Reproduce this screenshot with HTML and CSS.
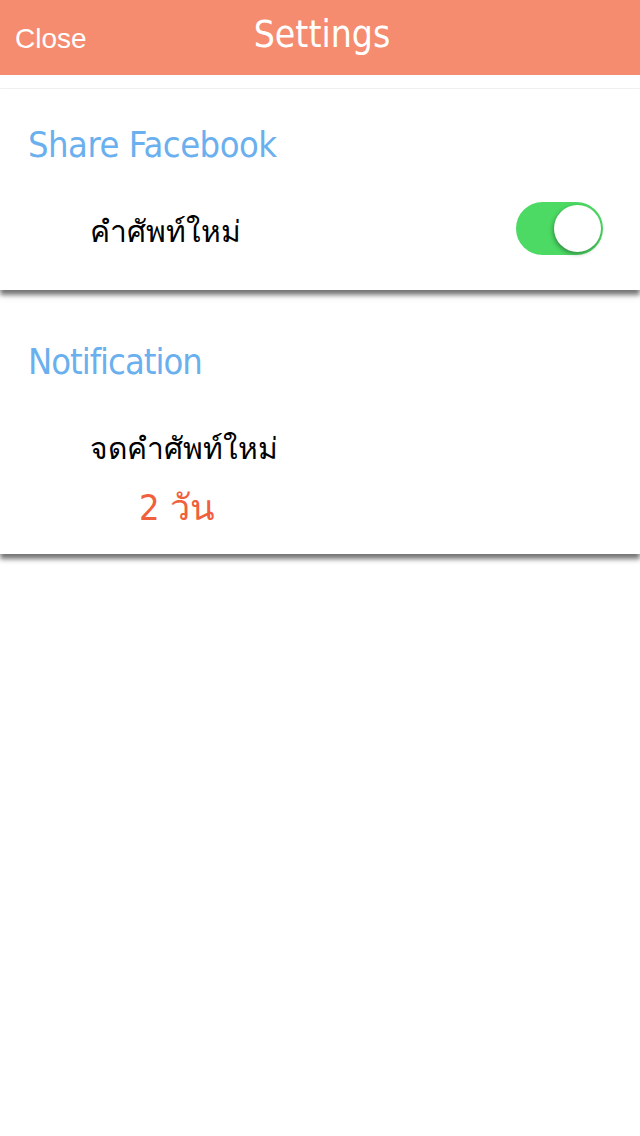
FILE: index.html
```html
<!DOCTYPE html>
<html lang="th">
<head>
  <meta charset="UTF-8" />
  <title>Settings</title>
  <meta name="viewport" content="width=device-width, initial-scale=1.0" />
  <link rel="stylesheet" href="styles.css">
</head>
<body>
  <header class="topbar">
    <span class="close-btn">Close</span>
    <h1 class="title">Settings</h1>
  </header>

  <div class="divider"></div>

  <section class="card card-share">
    <h2 class="card-title">Share Facebook</h2>
    <div class="row">
      <span class="row-label">คำศัพท์ใหม่</span>
      <div class="switch on"><div class="knob"></div></div>
    </div>
  </section>

  <section class="card card-notify">
    <h2 class="card-title">Notification</h2>
    <div class="row-label">จดคำศัพท์ใหม่</div>
    <div class="days">2 วัน</div>
  </section>
</body>
</html>
```

FILE: styles.css
```css
html, body {
  min-height: 100%;
}
body {
  margin: 0;
  min-height: 100vh;
  background: #fff;
  font-family: "DejaVu Sans Condensed", "DejaVu Sans", sans-serif;
}
.topbar {
  height: 75px;
  background: #f58c70;
  display: flex;
  align-items: center;
  justify-content: center;
  position: relative;
  color: #fff;
}
.close-btn {
  position: absolute;
  left: 15px;
  top: 23px;
  font-family: "Liberation Sans", sans-serif;
  font-size: 28px;
}
.title {
  margin: 0 0 6px 4px;
  font-weight: normal;
  font-size: 37px;
}
.divider {
  height: 13px;
  border-bottom: 1px solid #f2f2f2;
}
.card {
  background: #fff;
  box-shadow: 0 5px 5px rgba(0, 0, 0, 0.55);
  padding: 0 28px;
  position: relative;
}
.card-share {
  height: 201px;
  margin-bottom: 13px;
}
.card-notify {
  height: 251px;
}
.card-title {
  margin: 0;
  font-weight: normal;
  font-size: 36px;
  letter-spacing: -0.5px;
  color: #6ab0ee;
}
.card-share .card-title {
  padding-top: 35px;
}
.card-notify .card-title {
  padding-top: 38px;
  letter-spacing: -1px;
}
.row {
  display: flex;
  align-items: center;
  justify-content: space-between;
  margin-top: 36px;
  padding-right: 9px;
}
.row-label {
  padding-left: 62px;
  font-size: 30px;
  font-weight: 300;
  color: #000;
}
.card-share .row-label {
  padding-top: 7px;
}
.card-notify .row-label {
  margin-top: 43px;
}
.days {
  padding-left: 111px;
  margin-top: 7px;
  font-size: 36px;
  color: #f0603c;
}
.switch {
  width: 87px;
  height: 53px;
  border-radius: 27px;
  background: #4cd964;
  position: relative;
}
.knob {
  position: absolute;
  right: 2px;
  top: 3px;
  width: 47px;
  height: 47px;
  border-radius: 50%;
  background: #fff;
  box-shadow: -1px 2px 4px rgba(0, 0, 0, 0.35);
}
```
